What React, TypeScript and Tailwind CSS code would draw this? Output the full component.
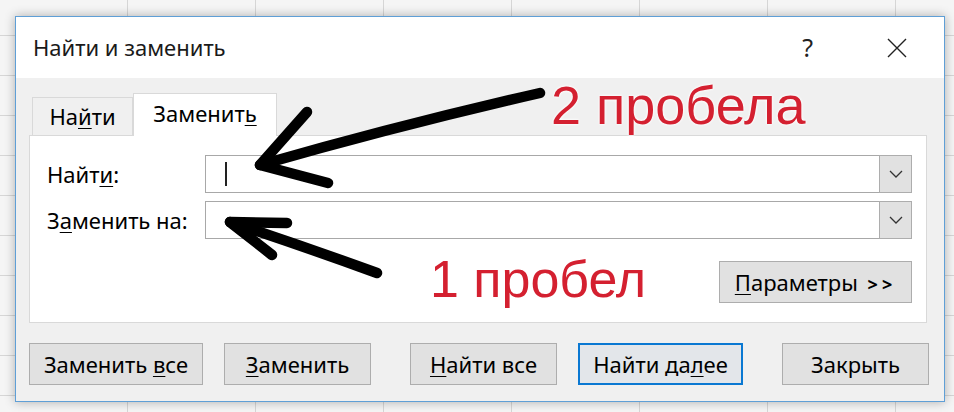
import type { ReactNode } from "react";

// access-key letter, underlined like a Win32 dialog
function K({ children }: { children: ReactNode }) {
  return <span className="underline decoration-1 underline-offset-[3px]">{children}</span>;
}

function Chevron() {
  return (
    <svg width="14" height="8" viewBox="0 0 14 8" fill="none">
      <path d="M1 1l6 6 6-6" stroke="#333" strokeWidth="1.3" />
    </svg>
  );
}

function Combo({ caret }: { caret?: boolean }) {
  return (
    <div className="flex h-[38px] w-[707px] border border-[#a8a8a8] bg-white">
      <div className="flex flex-1 items-center pl-[19px]">
        {caret && <span className="h-[24px] w-[2px] bg-[#222]" />}
      </div>
      <div className="-my-px -mr-px flex w-[33px] items-center justify-center border border-[#adadad] bg-[#e1e1e1]">
        <Chevron />
      </div>
    </div>
  );
}

function Btn({ children, width, primary }: { children: ReactNode; width: string; primary?: boolean }) {
  return (
    <button
      type="button"
      className={
        primary
          ? `flex h-[42px] ${width} items-center justify-center border-2 border-[#0a78d2] bg-[#e3e6ea] text-[22px] text-black`
          : `flex h-[42px] ${width} items-center justify-center border border-[#adadad] bg-[#e1e1e1] text-[22px] text-black`
      }
    >
      <span>{children}</span>
    </button>
  );
}

export default function App() {
  return (
    <div className="relative h-[412px] w-[954px] overflow-hidden bg-[#f5f5f5] bg-[linear-gradient(to_right,#d6d6d6_1px,transparent_1px),linear-gradient(to_bottom,#d6d6d6_1px,transparent_1px)] bg-[size:128px_40px] bg-[position:127px_35px] pl-[15px] pt-[16px] font-['Noto_Sans',sans-serif] text-black">
      <div className="flex h-[386px] w-[930px] flex-col border border-[#5f9fd6] bg-[#f0f0f0] shadow-[0_0_10px_rgba(0,0,0,0.3)]">
        {/* title bar */}
        <div className="flex h-[61px] shrink-0 items-center bg-white pl-[17px] pr-[36px]">
          <span className="text-[22px] text-[#1a1a1a]">Найти и заменить</span>
          <span className="ml-auto mr-[74px] text-[25px] leading-none text-[#222]">?</span>
          <svg width="20" height="20" viewBox="0 0 20 20" fill="none" className="mr-[1px]">
            <path d="M1 1l18 18M19 1L1 19" stroke="#222" strokeWidth="1.4" />
          </svg>
        </div>

        <div className="flex flex-col px-[13px] pt-[15px]">
          {/* tabs */}
          <div className="flex h-[42px] items-end pl-[3px]">
            <div className="flex h-[38px] w-[101px] items-center justify-center border border-b-0 border-[#d9d9d9] bg-[#f0f0f0] text-[22px]">
              <span>
                На<K>й</K>ти
              </span>
            </div>
            <div className="relative z-10 -mb-px flex h-[43px] w-[144px] items-center justify-center border border-b-0 border-[#d9d9d9] bg-white pb-[4px] text-[22px]">
              <span>
                Заменит<K>ь</K>
              </span>
            </div>
          </div>

          {/* tab panel */}
          <div className="flex h-[188px] w-[898px] flex-col border border-[#d9d9d9] bg-white pl-[17px] pt-[19px]">
            <div className="flex items-center">
              <span className="w-[158px] text-[22px]">
                Найт<K>и</K>:
              </span>
              <Combo caret />
            </div>
            <div className="mt-[8px] flex items-center">
              <span className="w-[158px] text-[22px]">
                З<K>а</K>менить на:
              </span>
              <Combo />
            </div>
            <div className="mt-[22px] flex justify-end pr-[14px]">
              <Btn width="w-[193px]">
                <K>П</K>араметры <span className="ml-[4px] text-[18px] font-bold tracking-[4px]">&gt;&gt;</span>
              </Btn>
            </div>
          </div>

          {/* dialog buttons */}
          <div className="mt-[20px] flex">
            <Btn width="w-[174px]">
              Заменить <K>в</K>се
            </Btn>
            <div className="ml-[21px]">
              <Btn width="w-[147px]">
                <K>З</K>аменить
              </Btn>
            </div>
            <div className="ml-[39px]">
              <Btn width="w-[147px]">
                <K>Н</K>айти все
              </Btn>
            </div>
            <div className="ml-[21px]">
              <Btn width="w-[165px]" primary>
                Найти да<K>л</K>ее
              </Btn>
            </div>
            <div className="ml-[39px]">
              <Btn width="w-[147px]">Закрыть</Btn>
            </div>
          </div>
        </div>
      </div>

      {/* annotations drawn on top of the screenshot */}
      <span className="absolute left-[551px] top-[78px] font-['Liberation_Sans',Arial,sans-serif] text-[54px] leading-none text-[#d42030] [text-shadow:0_0_3px_#fff,0_0_3px_#fff]">
        2 пробела
      </span>
      <span className="absolute left-[430px] top-[253px] font-['Liberation_Sans',Arial,sans-serif] text-[52px] leading-none text-[#d42030] [text-shadow:0_0_3px_#fff,0_0_3px_#fff]">
        1 пробел
      </span>
      <svg className="pointer-events-none absolute left-0 top-0" width="954" height="412" viewBox="0 0 954 412" fill="none">
        <g stroke="#000" strokeWidth="10.5" strokeLinecap="round" strokeLinejoin="round">
          <path d="M540 93 Q400 125 260 165" />
          <path d="M307 112 L260 165 L328 183" />
          <path d="M377 273 Q300 245 230 222" />
          <path d="M287 223 L230 222 L272 255" />
        </g>
      </svg>
    </div>
  );
}
